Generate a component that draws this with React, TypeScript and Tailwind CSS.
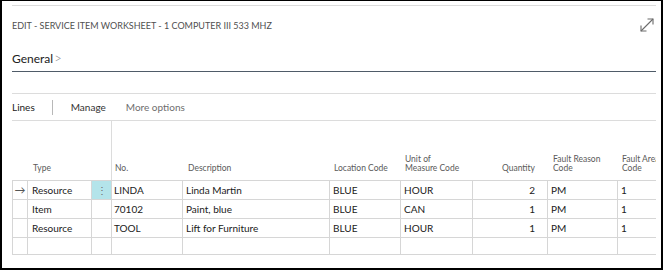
import { Fragment } from 'react'

const font = { fontFamily: '"Segoe UI", Lato, "Liberation Sans", sans-serif' }

type Row = { type: string; no: string; desc: string; loc: string; uom: string; qty: string; fault: string; area: string }

const rows: Row[] = [
  { type: 'Resource', no: 'LINDA', desc: 'Linda Martin', loc: 'BLUE', uom: 'HOUR', qty: '2', fault: 'PM', area: '1' },
  { type: 'Item', no: '70102', desc: 'Paint, blue', loc: 'BLUE', uom: 'CAN', qty: '1', fault: 'PM', area: '1' },
  { type: 'Resource', no: 'TOOL', desc: 'Lift for Furniture', loc: 'BLUE', uom: 'HOUR', qty: '1', fault: 'PM', area: '1' },
  { type: '', no: '', desc: '', loc: '', uom: '', qty: '', fault: '', area: '' },
]

function ExpandIcon() {
  return (
    <svg width="16" height="16" viewBox="0 0 16 16" fill="none" stroke="#6b6b6b" strokeWidth="1.1">
      <path d="M2 14 L14 2" />
      <path d="M8.5 2 H14 V7.5" />
      <path d="M2 8.5 V14 H7.5" />
    </svg>
  )
}

const cell = 'border-r border-b border-[#d6d6d6] flex items-center shrink-0 overflow-hidden whitespace-nowrap'

export default function App() {
  return (
    <div
      style={font}
      className="w-[663px] h-[270px] border-l-2 border-t border-r-2 border-b-2 border-black bg-white pl-[10px] pr-[5px] flex flex-col overflow-hidden"
    >
      <div className="mt-[4px] h-px bg-[#dcdcdc]" />

      <div className="flex items-center justify-between h-[37px] pt-[3px]">
        <span className="text-[9px] text-[#505050] uppercase">
          Edit - Service Item Worksheet - 1 Computer III 533 MHz
        </span>
        <span className="mr-[1px] mt-[-2px]">
          <ExpandIcon />
        </span>
      </div>

      <div className="flex items-center h-[17px] mt-[7px] text-[12px] text-[#212121]">
        General
        <span className="ml-[1px] text-[#8a8a8a] text-[13px] font-light">&gt;</span>
      </div>
      <div className="mt-[4px] h-px bg-[#4f5b68]" />

      <div className="mt-[21px] h-px bg-[#dcdcdc]" />
      <div className="flex items-center h-[26px] pt-[1px] text-[10px]">
        <span className="text-[#212121]">Lines</span>
        <span className="ml-[17px] w-px h-[15px] bg-[#b8b8b8]" />
        <span className="ml-[18px] text-[#333333]">Manage</span>
        <span className="ml-[20px] text-[#6e6e6e]">More options</span>
      </div>
      <div className="h-px bg-[#dcdcdc]" />

      <div className="w-[644px] overflow-hidden">
        <div className="flex h-[60px] border-b border-[#d6d6d6] text-[8.5px] text-[#5a5a5a] leading-[9px]">
          <div className="w-[100px] shrink-0 border-r border-[#dcdcdc] flex items-end pl-[21px] pb-[7px]">Type</div>
          <div className="w-[71px] shrink-0 flex items-end pl-[3px] pb-[7px]">No.</div>
          <div className="w-[147px] shrink-0 flex items-end pl-[5px] pb-[7px]">Description</div>
          <div className="w-[71px] shrink-0 flex items-end pl-[4px] pb-[7px]">Location Code</div>
          <div className="w-[72px] shrink-0 flex items-end pl-[4px] pb-[7px]">Unit of<br />Measure Code</div>
          <div className="w-[75px] shrink-0 flex items-end justify-end pr-[13px] pb-[7px]">Quantity</div>
          <div className="w-[70px] shrink-0 flex items-end pl-[5px] pb-[7px]">Fault Reason<br />Code</div>
          <div className="w-[60px] shrink-0 flex items-end pl-[4px] pb-[7px] whitespace-nowrap">Fault Area<br />Code</div>
        </div>

        {rows.map((r, i) => (
          <div
            key={i}
            className={`flex text-[10px] text-[#212121] ${i === rows.length - 1 ? 'h-[17px]' : 'h-[19px]'}`}
          >
            <Fragment>
              <div className={`${cell} w-[16px] border-l justify-center text-[#555] text-[11px]`}>{i === 0 ? '→' : ''}</div>
              <div className={`${cell} w-[64px] pl-[4px]`}>{r.type}</div>
              <div className={`${cell} w-[20px] justify-center ${i === 0 ? 'bg-[#b4e4ea] text-[#6a6a6a]' : ''}`}>
                {i === 0 ? '⋮' : ''}
              </div>
              <div className={`${cell} w-[71px] pl-[2px]`}>{r.no}</div>
              <div className={`${cell} w-[147px] pl-[3px]`}>{r.desc}</div>
              <div className={`${cell} w-[71px] pl-[3px]`}>{r.loc}</div>
              <div className={`${cell} w-[72px] pl-[3px]`}>{r.uom}</div>
              <div className={`${cell} w-[75px] justify-end pr-[12px]`}>{r.qty}</div>
              <div className={`${cell} w-[70px] pl-[3px]`}>{r.fault}</div>
              <div className={`${cell} w-[60px] pl-[3px]`}>{r.area}</div>
            </Fragment>
          </div>
        ))}
      </div>
    </div>
  )
}
